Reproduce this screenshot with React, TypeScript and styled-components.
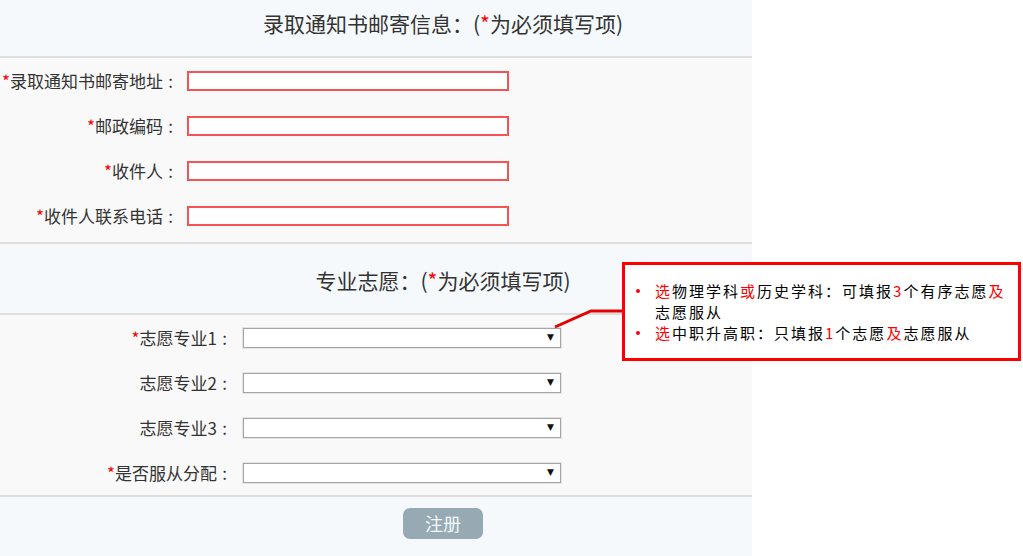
import React from "react";
import styled, { createGlobalStyle } from "styled-components";

const GlobalStyle = createGlobalStyle`
  html, body { margin: 0; padding: 0; background: #ffffff; }
  body { font-family: "Noto Sans CJK SC", "Noto Sans", sans-serif; color: #333; }
  * { box-sizing: border-box; }
`;

const Page = styled.div`
  position: relative;
  width: 1023px;
  height: 556px;
  overflow: hidden;
`;

const Panel = styled.div`
  width: 752px;
`;

const SectionHeader = styled.div<{ $h: number; $pt: number }>`
  height: ${(p) => p.$h + 2}px;
  padding: ${(p) => p.$pt}px 0 0 134px;
  background: #f5f9fc;
  border-bottom: 2px solid #dedede;
  text-align: center;
  font-size: 21px;
  line-height: 30px;
  color: #333;
  white-space: nowrap;
`;

const Req = styled.span`
  color: #f00;
`;

const FieldList = styled.div<{ $pb: number }>`
  display: flex;
  flex-direction: column;
  background: #f9f9f9;
  border-bottom: 2px solid #dedede;
  padding-bottom: ${(p) => p.$pb}px;
`;

const Row = styled.div`
  display: flex;
  align-items: center;
  height: 45px;
`;

const Label = styled.label<{ $w: number; $gap: number }>`
  flex: none;
  width: ${(p) => p.$w}px;
  margin-right: ${(p) => p.$gap}px;
  font-size: 17px;
  line-height: 20px;
  color: #333;
  white-space: nowrap;
  display: flex;
  justify-content: flex-end;
`;

const Colon = styled.span`
  display: inline-block;
  width: 15px;
  text-align: center;
`;

const TextInput = styled.input`
  width: 322px;
  height: 20px;
  margin: 0;
  padding: 0 4px;
  border: 2px solid #f55454;
  background: #fff;
  outline: none;
  font-size: 13px;
`;

const SelectBox = styled.div`
  width: 318px;
  height: 20px;
  border: 1px solid #a5a5a5;
  box-shadow: 0 0 0 1px #e4e4e4;
  background: #fff;
  display: flex;
  align-items: center;
  justify-content: flex-end;
  padding-right: 6px;
`;

const Arrow = styled.span`
  font-size: 9px;
  line-height: 9px;
  color: #111;
  font-family: "DejaVu Sans", sans-serif;
`;

const Footer = styled.div`
  height: 59px;
  padding: 11px 0 0 134px;
  background: #f5f9fc;
  display: flex;
  justify-content: center;
  align-items: flex-start;
`;

const SubmitButton = styled.button`
  width: 80px;
  height: 31px;
  border: none;
  border-radius: 7px;
  background: #97aab3;
  color: #f3f6f8;
  font-family: "Noto Sans CJK SC", sans-serif;
  font-size: 18px;
  line-height: 31px;
  padding: 0;
`;

const Tip = styled.div`
  position: absolute;
  left: 622px;
  top: 262px;
  width: 399px;
  height: 99px;
  border: 3px solid #f00;
  background: #fff;
`;

const TipList = styled.ul`
  list-style: none;
  margin: 0;
  padding: 15px 3px 0 30px;
  width: 393px;
`;

const TipItem = styled.li`
  position: relative;
  font-size: 15px;
  letter-spacing: 2px;
  line-height: 21px;
  color: #000;
  &::before {
    content: "";
    position: absolute;
    left: -19px;
    top: 9px;
    width: 4px;
    height: 4px;
    border-radius: 50%;
    background: #f00;
  }
`;

const Hi = styled.span`
  color: #f00;
`;

const Connector = styled.svg`
  position: absolute;
  left: 550px;
  top: 300px;
`;

const addressFields = [
  { label: "录取通知书邮寄地址", req: true },
  { label: "邮政编码", req: true },
  { label: "收件人", req: true },
  { label: "收件人联系电话", req: true },
];

const majorFields = [
  { label: "志愿专业1", req: true },
  { label: "志愿专业2", req: false },
  { label: "志愿专业3", req: false },
  { label: "是否服从分配", req: true },
];

export default function App() {
  return (
    <>
      <GlobalStyle />
      <Page>
        <Panel>
          <SectionHeader $h={56} $pt={8}>
            录取通知书邮寄信息：(<Req>*</Req>为必须填写项)
          </SectionHeader>
          <FieldList $pb={4}>
            {addressFields.map((f) => (
              <Row key={f.label}>
                <Label $w={178} $gap={9}>
                  {f.req && <Req>*</Req>}
                  {f.label}
                  <Colon>:</Colon>
                </Label>
                <TextInput type="text" />
              </Row>
            ))}
          </FieldList>
          <SectionHeader $h={69} $pt={21}>
            专业志愿：(<Req>*</Req>为必须填写项)
          </SectionHeader>
          <FieldList $pb={0}>
            {majorFields.map((f) => (
              <Row key={f.label}>
                <Label $w={232} $gap={11}>
                  {f.req && <Req>*</Req>}
                  {f.label}
                  <Colon>:</Colon>
                </Label>
                <SelectBox role="combobox">
                  <Arrow>▼</Arrow>
                </SelectBox>
              </Row>
            ))}
          </FieldList>
          <Footer>
            <SubmitButton>注册</SubmitButton>
          </Footer>
        </Panel>
        <Connector width="76" height="32" viewBox="0 0 76 32">
          <polyline
            points="5,27 41,11 74,11"
            fill="none"
            stroke="#e60000"
            strokeWidth="3"
          />
        </Connector>
        <Tip>
          <TipList>
            <TipItem>
              <Hi>选</Hi>物理学科<Hi>或</Hi>历史学科：可填报<Hi>3</Hi>个有序志愿<Hi>及</Hi>志愿服从
            </TipItem>
            <TipItem>
              <Hi>选</Hi>中职升高职：只填报<Hi>1</Hi>个志愿<Hi>及</Hi>志愿服从
            </TipItem>
          </TipList>
        </Tip>
      </Page>
    </>
  );
}
